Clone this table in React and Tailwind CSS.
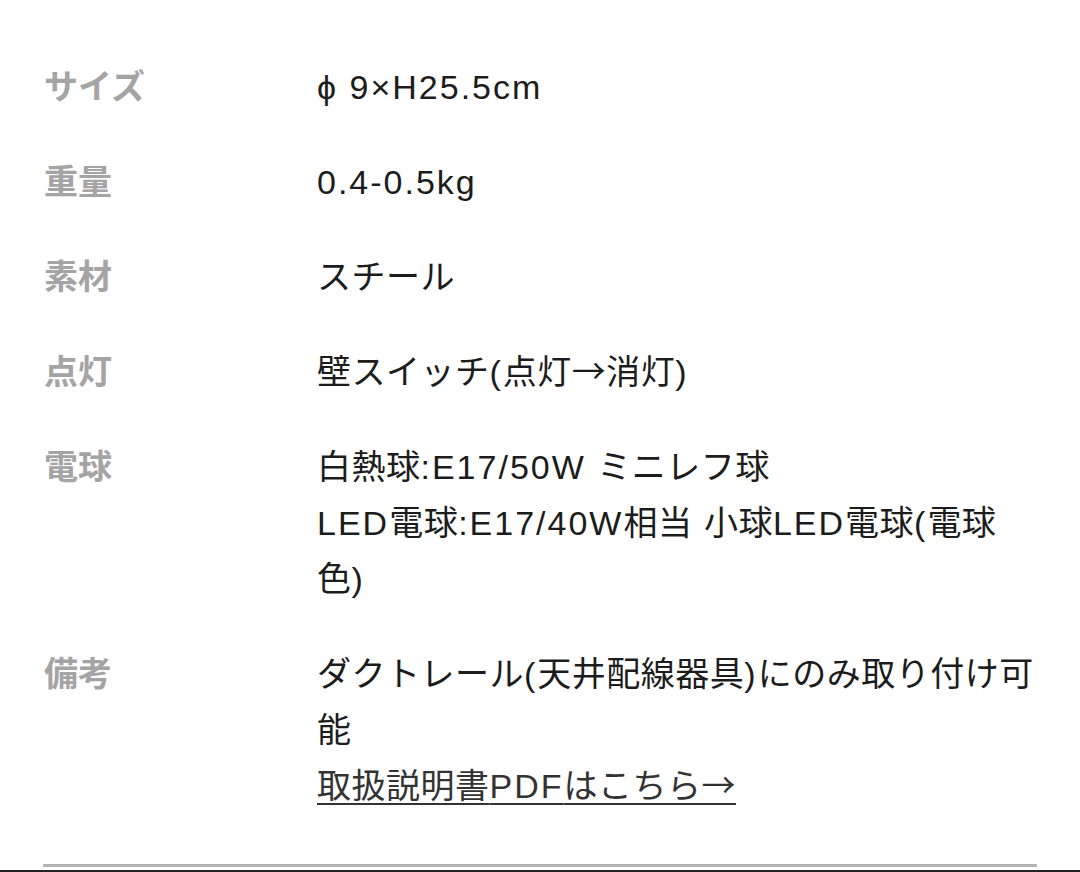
import React from "react";

function T({ text }) {
  const parts = text.split(/([\x00-\x7F×ϕ]+)/).filter((p) => p.length > 0);
  return (
    <>
      {parts.map((p, i) =>
        /^[\x00-\x7F×ϕ]+$/.test(p) ? (
          <span key={i} className="tracking-[2px]" style={{ fontFamily: '"Liberation Sans", Arial, sans-serif' }}>
            {p}
          </span>
        ) : (
          <span key={i}>{p}</span>
        )
      )}
    </>
  );
}

const rows = [
  { label: "サイズ", lines: ["ϕ 9×H25.5cm"] },
  { label: "重量", lines: ["0.4-0.5kg"] },
  { label: "素材", lines: ["スチール"] },
  { label: "点灯", lines: ["壁スイッチ(点灯→消灯)"] },
  {
    label: "電球",
    lines: ["白熱球:E17/50W ミニレフ球", "LED電球:E17/40W相当 小球LED電球(電球", "色)"],
  },
];

export default function App() {
  return (
    <div
      className="h-[872px] w-[1080px] bg-white flex flex-col overflow-hidden"
      style={{ fontFamily: '"Noto Sans CJK JP", sans-serif' }}
    >
      <div className="flex flex-col gap-[39px] pl-[44px] pt-[57px] text-[34px] leading-[56px]">
        {rows.map((r) => (
          <div key={r.label} className="flex">
            <div className="w-[273px] shrink-0 h-[56px] font-bold text-[#a4a4a4]">{r.label}</div>
            <div className="flex-1 text-[#1c1c1c] tracking-[0.5px]">
              {r.lines.map((l, i) => (
                <div key={i} className="h-[56px] whitespace-pre">
                  <T text={l} />
                </div>
              ))}
            </div>
          </div>
        ))}
        <div className="flex">
          <div className="w-[273px] shrink-0 h-[56px] font-bold text-[#a4a4a4]">備考</div>
          <div className="flex-1 text-[#1c1c1c] tracking-[0.5px]">
            <div className="h-[56px] whitespace-pre">
              <T text="ダクトレール(天井配線器具)にのみ取り付け可" />
            </div>
            <div className="h-[56px]">能</div>
            <div className="h-[56px]">
              <a className="text-[#333333] underline decoration-[2px] underline-offset-[5px]">
                <T text="取扱説明書PDFはこちら→" />
              </a>
            </div>
          </div>
        </div>
      </div>
      <div className="mx-[43px] mt-[52px] h-[3px] bg-[#b3b3b3]" />
      <div className="flex-1" />
      <div className="h-[2px] bg-[#222222]" />
    </div>
  );
}
